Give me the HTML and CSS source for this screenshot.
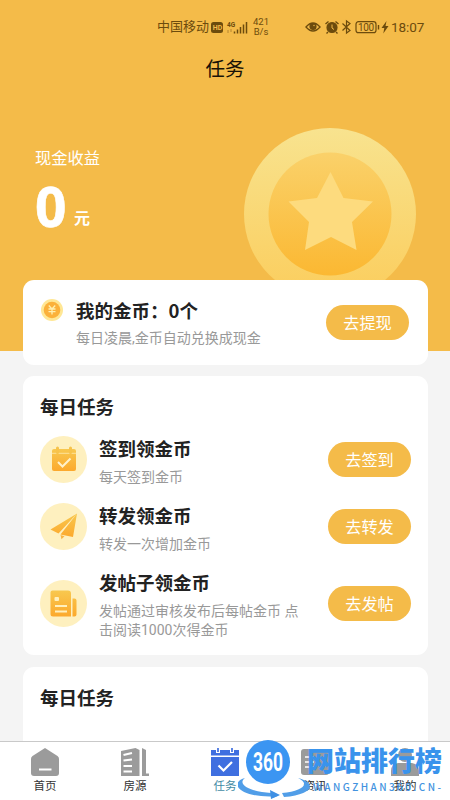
FILE: index.html
```html
<!DOCTYPE html>
<html lang="zh-CN">
<head>
<meta charset="utf-8">
<title>任务</title>
<link rel="stylesheet" href="styles.css">
</head>
<body>
<div class="screen">
  <header class="hero">
    <svg class="coin" viewBox="0 0 172 172">
      <defs>
        <linearGradient id="ring" x1="0" y1="0" x2="0" y2="1"><stop offset="0" stop-color="#f8e38f"/><stop offset="1" stop-color="#fbcd5c"/></linearGradient>
        <linearGradient id="disc" x1="0" y1="0" x2="0" y2="1"><stop offset="0" stop-color="#fad16a"/><stop offset="1" stop-color="#fbb832"/></linearGradient>
      </defs>
      <circle cx="86" cy="86" r="86" fill="url(#ring)"/>
      <circle cx="86" cy="86" r="61.5" fill="url(#disc)"/>
      <path d="M86.500 44 99.500 70 129 73.500 108 94 112.500 122 87 109 61 122 65 94 44.500 73.500 73 70Z" fill="#fddb7e"/>
    </svg>
    <div class="status">
      <span class="carrier">中国移动</span>
      <svg class="signals" viewBox="0 0 38 16">
        <rect x="1" y="3" width="12" height="11" rx="2.500" fill="#6c4b0d"/>
        <text x="2.700" y="11.200" class="hd">HD</text>
        <text x="17" y="8" class="net">4G</text>
        <path d="M18 11v3M21 10v3" stroke="#b68630" stroke-width="1"/>
        <path d="M24.500 12.500v2M27.500 10.500v4M30.500 8v6.500M33.500 5.500v9M36.500 3v11.500" stroke="#6c4b0d" stroke-width="1.500"/>
      </svg>
      <span class="speed">421<br>B/s</span>
      <svg class="device" viewBox="0 0 86 16" fill="none" stroke="#6c4b0d" stroke-width="1.400">
        <path d="M1 8Q8 0 15 8Q8 16 1 8Z"/><circle cx="8" cy="7.500" r="2.900" fill="#6c4b0d"/><circle cx="9" cy="6.500" r=".7" fill="#f4bb49" stroke="none"/>
        <circle cx="27" cy="8.500" r="4.900" fill="#6c4b0d"/><path d="M20.500 5 23.500 2.500M30.500 2.500 33.500 5M23 13l-1.500 1.500M31 13l1.500 1.500"/><path d="M27 5.500V9l2 1.500" stroke="#f4bb49" stroke-width="1"/>
        <path d="M37.500 4.500 45 11.500 41.500 14V2L45 4.500 37.500 11.500" stroke-width="1.200"/>
        <rect x="51" y="2.700" width="20" height="11" rx="2.500" stroke-width="1.200"/><path d="M73.500 6v4.500"/>
        <text x="53" y="11.700" class="charge" textLength="16">100</text>
        <path d="M81.500 2 76.500 9h2.800l-1 5.500L83.500 7h-3z" fill="#6c4b0d" stroke="none"/>
      </svg>
      <span class="time">18:07</span>
    </div>
    <h1 class="page-title">任务</h1>
    <div class="income">
      <div class="income-label">现金收益</div>
      <div class="income-value"><strong>0</strong><span>元</span></div>
    </div>
  </header>

  <main class="content">
    <section class="card balance">
      <svg class="yen" viewBox="0 0 22 22"><circle cx="11" cy="11" r="11" fill="#ffe795"/><circle cx="11" cy="11" r="8.300" fill="#fbb13a"/><path d="m7.800 6.500 3.200 3.500 3.200-3.500M7.500 10h7M7.500 12.700h7M11 10v5.500" fill="none" stroke="#fff0b0" stroke-width="1.300"/></svg>
      <div class="text">
        <h3>我的金币：0个</h3>
        <p>每日凌晨,金币自动兑换成现金</p>
      </div>
      <button class="pill">去提现</button>
    </section>

    <section class="card tasks">
      <h2>每日任务</h2>
      <div class="task">
        <svg class="badge" viewBox="0 0 47 47">
          <defs><linearGradient id="gold" x1="0" y1="0" x2="0" y2="1"><stop offset="0" stop-color="#f8c84f"/><stop offset="1" stop-color="#fca92d"/></linearGradient></defs>
          <circle cx="23.500" cy="23.500" r="23.500" fill="#fef0bf"/>
          <rect x="12" y="13" width="24" height="22" rx="2" fill="url(#gold)"/>
          <path d="M12 17.300h24" stroke="#fde39a"/><path d="M17.500 12v4.500M30.500 12v4.500" stroke="#f7c34b" stroke-width="3" stroke-linecap="round"/>
          <path d="m18 26 4.500 4.500 8-8" fill="none" stroke="#fff1cb" stroke-width="2"/>
        </svg>
        <div class="text"><h3>签到领金币</h3><p>每天签到金币</p></div>
        <button class="pill">去签到</button>
      </div>
      <div class="task">
        <svg class="badge" viewBox="0 0 47 47">
          <circle cx="23.500" cy="23.500" r="23.500" fill="#fef0bf"/>
          <path d="M37 10.500 10.500 26.500 18.500 30.500ZM37 10.500 20.500 31.500 33 34Z" fill="url(#gold)"/>
          <path d="m20.500 32 4 1.300-3 3z" fill="#f9b443"/>
        </svg>
        <div class="text"><h3>转发领金币</h3><p>转发一次增加金币</p></div>
        <button class="pill">去转发</button>
      </div>
      <div class="task">
        <svg class="badge" viewBox="0 0 47 47">
          <circle cx="23.500" cy="23.500" r="23.500" fill="#fef0bf"/>
          <path d="M12.500 10.500H28Q31 10.500 31 13.500V36.500H13Q10.500 36.500 10.500 34V12.500Q10.500 10.500 12.500 10.500ZM32.500 18.500H34.500Q36.500 18.500 36.500 20.500V34.500Q36.500 36.500 34.500 36.500H32.500Z" fill="url(#gold)"/>
          <rect x="14.500" y="17" width="4.500" height="4" rx="1" fill="#fff0bd"/><path d="M15 26h12M15 31.500h12" stroke="#fff0bd" stroke-width="1.900"/>
        </svg>
        <div class="text"><h3>发帖子领金币</h3><p>发帖通过审核发布后每帖金币 点击阅读1000次得金币</p></div>
        <button class="pill">去发帖</button>
      </div>
    </section>

    <section class="card more"><h2>每日任务</h2></section>
  </main>

  <nav class="tabs">
    <a class="tab"><svg viewBox="0 0 28 28"><path d="M14 0 26.500 8Q28 9 28 11V25Q28 28 25 28H3Q0 28 0 25V11Q0 9 1.500 8Z" fill="#9b9b9b"/><path d="M8 21.500h12.500" stroke="#fff" stroke-width="2"/></svg>首页</a>
    <a class="tab"><svg viewBox="0 0 28 28"><path d="M0 3 14.500 0 18.500 2V28H0Z" fill="#9b9b9b"/><path d="m2.500 7 8.500-2M2.500 12.500l8.500-1M2.500 18H11M2.500 23.500H11" stroke="#fff" stroke-width="2.200"/><path d="M21 0 25 2V25.500H28V28H21Z" fill="#9b9b9b"/></svg>房源</a>
    <a class="tab active"><svg viewBox="0 0 28 28"><path d="M0 2H5V5H9V2H19V5H23V2H28V7.500H0ZM0 9H28V28H0Z" fill="#3f6fe0"/><path d="M7 0v4M21 0v4" stroke="#3f6fe0" stroke-width="1.700"/><path d="m7.500 17.500 5 5 8.500-8.500" fill="none" stroke="#fff" stroke-width="2.200"/></svg>任务</a>
    <a class="tab"><svg viewBox="0 0 28 28"><rect y="1" width="28" height="26" rx="3" fill="#9b9b9b"/><path d="M4 9h9M4 14h9M4 19h9" stroke="#fff" stroke-width="1.700"/></svg>资讯</a>
    <a class="tab"><svg viewBox="0 0 28 28"><circle cx="14" cy="7" r="7" fill="#9b9b9b"/><path d="M0 28V23Q0 16 7 15H21Q28 16 28 23V28Z" fill="#9b9b9b"/></svg>我的</a>
  </nav>

  <svg class="brand" viewBox="0 0 212 64">
    <path d="M7 42C-2 49 14 56 33 57L41 59.500 33 62.500 33 60.500C2 61-10 47 7 42ZM60 42C73 48 64 55 44 57L46 61C74 59 80 47 60 42Z" fill="#519ee8"/>
    <path d="M32 54 42 59 33 63Z" fill="#3f90e4"/>
    <circle cx="30" cy="26" r="22" fill="#3b95f2"/>
    <text x="15" y="35" class="brand-number" textLength="30" lengthAdjust="spacingAndGlyphs">360</text>
    <text x="69" y="35" class="brand-name" textLength="135">网站排行榜</text>
    <text x="75" y="54.500" class="brand-site" textLength="128">WANGZHAN360.CN-</text>
  </svg>
</div>
</body>
</html>
```
FILE: styles.css
```css
* { box-sizing: border-box; }
body {
  margin: 0;
  font-family: "Noto Sans CJK SC", sans-serif;
  color: #222;
}
h1, h2, h3, p { margin: 0; }
.screen {
  position: relative;
  height: 800px;
  overflow: hidden;
  display: flex;
  flex-direction: column;
  background: #f4f4f4;
}
.hero {
  position: relative;
  flex: none;
  height: 351px;
  background: #f4bb49;
}
.coin {
  position: absolute;
  left: 244px;
  top: 128px;
  width: 172px;
  height: 172px;
}
.status {
  height: 52px;
  padding: 2px 0 0 157px;
  display: flex;
  align-items: center;
  color: #6c4b0d;
}
.carrier { width: 53px; margin-top: -3px; font-size: 13px; white-space: nowrap; }
.signals { width: 38px; height: 16px; }
.hd { font: bold 7px "Roboto", sans-serif; fill: #f4bb49; }
.net { font: bold 6.500px "Roboto", sans-serif; fill: #6c4b0d; }
.speed {
  width: 26px;
  font: 9.500px/10px "Roboto", sans-serif;
  text-align: center;
}
.device { width: 86px; height: 16px; margin-left: 31px; }
.charge { font: 10px "Roboto", sans-serif; fill: #6c4b0d; stroke: none; }
.time { font: 13.500px "Roboto", sans-serif; letter-spacing: -.1px; }
.page-title {
  height: 32px;
  font-size: 19.500px;
  font-weight: 400;
  line-height: 31px;
  text-align: center;
  color: #171207;
}
.income { padding: 61px 0 0 35px; color: #fff; }
.income-label { font-size: 16.300px; line-height: 24px; }
.income-value { display: flex; align-items: baseline; margin-top: 7px; }
.income-value strong { font: 700 55px/60px "Open Sans", sans-serif; width: 39px; -webkit-text-stroke: .6px #fff; }
.income-value span { font-size: 16px; font-weight: 700; line-height: 20px; position: relative; top: -3px; }

.content {
  position: relative;
  flex: 1;
  min-height: 0;
  margin-top: -71px;
  padding: 0 22px 0 23px;
  display: flex;
  flex-direction: column;
}
.card { flex: none; border-radius: 11px; background: #fff; }
.text { flex: 1; min-width: 0; }
.text h3 { font-size: 18.500px; line-height: 24px; }
.text p {
  margin-top: 8px;
  font: 14px/19px "Roboto", "Noto Sans CJK SC", sans-serif;
  color: #999;
}
.pill {
  flex: none;
  width: 83px;
  height: 35px;
  padding: 0;
  border: 0;
  border-radius: 18px;
  background: #f4bb49;
  color: #fff;
  font: 16.200px/35px "Noto Sans CJK SC", sans-serif;
}
.balance {
  height: 85px;
  padding: 18px 19px 0 18px;
  display: flex;
  align-items: flex-start;
}
.yen { width: 22px; height: 22px; margin: 1px 13px 0 0; }
.balance .pill { margin-top: 7px; }
.balance .text p { margin-top: 7px; }
.tasks { height: 279px; margin-top: 11px; padding: 17px 17px 0; }
h2 { font-size: 18.500px; line-height: 26px; }
.task { display: flex; align-items: center; margin-bottom: 16px; }
.tasks h2 { margin-bottom: 17px; }
.badge { flex: none; width: 47px; height: 47px; margin: 0 12px 4px 0; }
.task .pill { margin: 0 0 4px 22px; }
.more { height: 120px; margin-top: 12px; padding: 17px; }

.tabs {
  position: relative;
  flex: none;
  height: 59px;
  border-top: 1px solid #c9c9c9;
  background: #fff;
  display: grid;
  grid-template-columns: repeat(5, 1fr);
}
.tab {
  display: flex;
  flex-direction: column;
  align-items: center;
  padding-top: 6px;
  font-size: 11.500px;
  line-height: 19px;
  color: #333;
}
.tab svg { width: 28px; height: 28px; }
.active { color: #438ba4; }

.brand {
  position: absolute;
  left: 238px;
  top: 736px;
  width: 212px;
  height: 64px;
}
.brand-number { font: bold 25px "Roboto", sans-serif; fill: #fff; }
.brand-name { font: 900 27px "Noto Sans CJK SC", sans-serif; fill: #3993ec; }
.brand-site { font: 500 10px "Noto Sans CJK SC", sans-serif; fill: #4393e0; }
```
